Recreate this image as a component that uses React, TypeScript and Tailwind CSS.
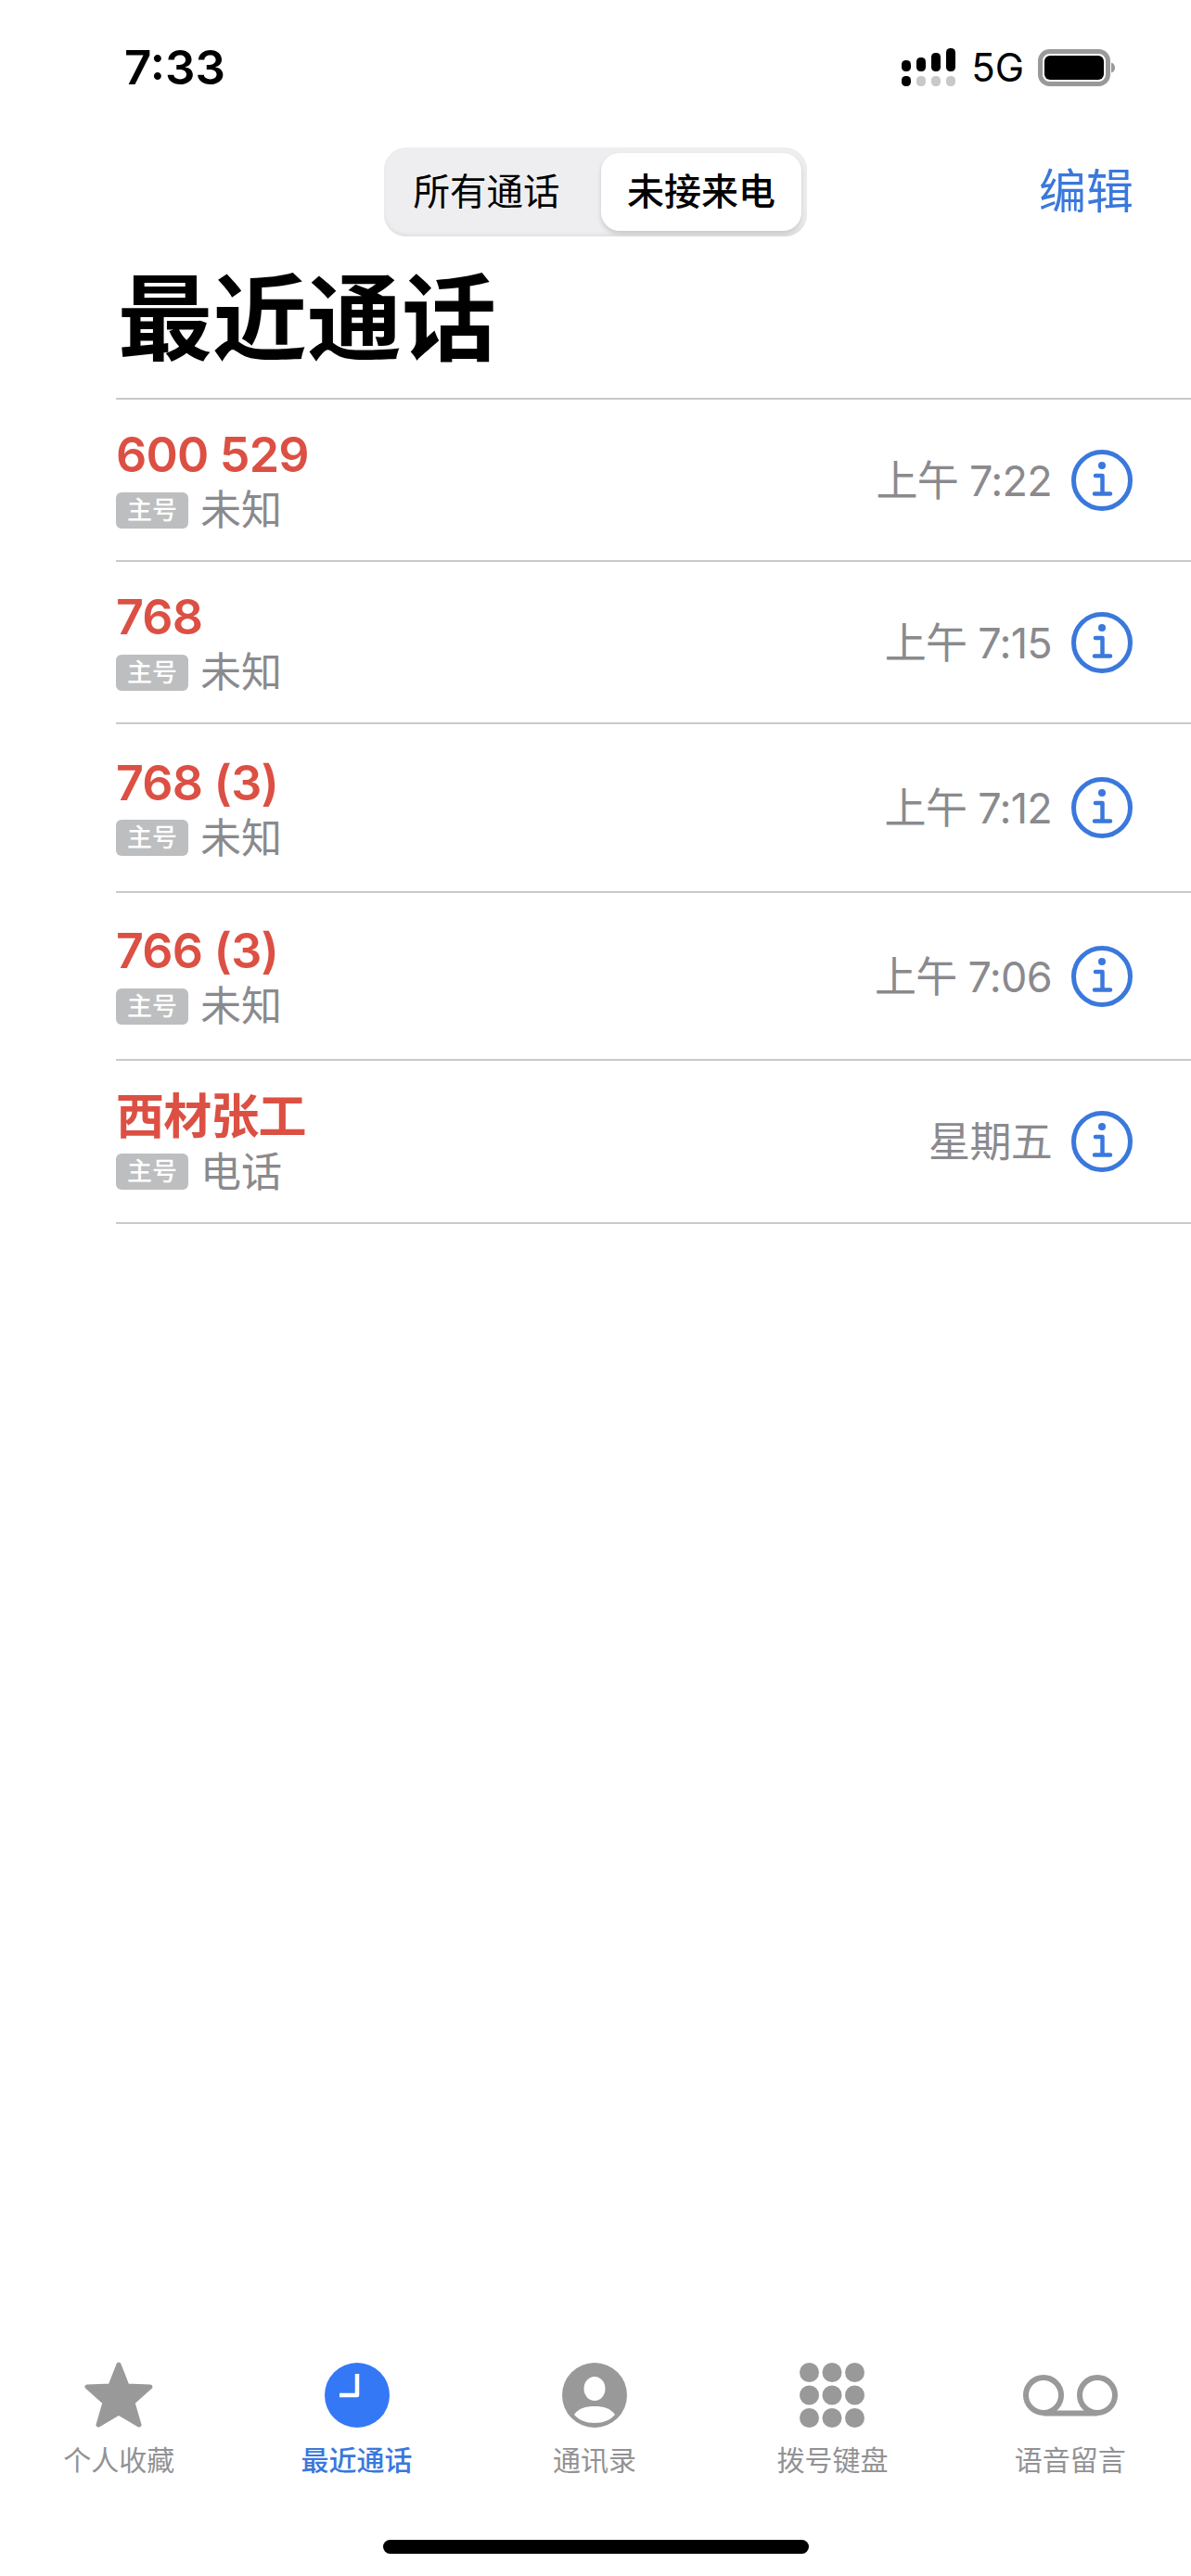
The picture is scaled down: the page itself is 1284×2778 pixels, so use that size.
const FONT = "font-['Inter','Noto_Sans_CJK_SC',sans-serif]";

const calls = [
  { name: "600 529", sub: "未知", time: "上午 7:22", h: "h-[175px]" },
  { name: "768", sub: "未知", time: "上午 7:15", h: "h-[175px]" },
  { name: "768 (3)", sub: "未知", time: "上午 7:12", h: "h-[182px]" },
  { name: "766 (3)", sub: "未知", time: "上午 7:06", h: "h-[181px]" },
  { name: "西材张工", sub: "电话", time: "星期五", h: "h-[176px]" },
];

function Signal() {
  return (
    <svg width="60" height="42" viewBox="0 0 60 42" className="block">
      <rect x="0" y="13" width="10" height="12" rx="4.5" fill="#000" />
      <rect x="16" y="10" width="10" height="15" rx="4.5" fill="#000" />
      <rect x="32" y="5" width="10" height="20" rx="4.5" fill="#000" />
      <rect x="48" y="0" width="10" height="25" rx="4.5" fill="#000" />
      <rect x="0" y="30" width="10" height="11" rx="4.5" fill="#000" />
      <rect x="16" y="30" width="10" height="11" rx="4.5" fill="#c8c8c8" />
      <rect x="32" y="30" width="10" height="11" rx="4.5" fill="#c8c8c8" />
      <rect x="48" y="30" width="10" height="11" rx="4.5" fill="#c8c8c8" />
    </svg>
  );
}

function Battery() {
  return (
    <svg width="84" height="40" viewBox="0 0 84 40" className="block">
      <rect x="2.5" y="2.5" width="73" height="35" rx="10" fill="none" stroke="#999" strokeWidth="5" />
      <rect x="7" y="7" width="64" height="26" rx="6" fill="#000" />
      <path d="M79 14.500c2.500 .8 4 2.800 4 5.500s-1.500 4.700-4 5.500z" fill="#999" />
    </svg>
  );
}

function InfoIcon() {
  return (
    <svg width="66" height="66" viewBox="0 0 66 66" className="block">
      <circle cx="33" cy="33" r="30.5" fill="none" stroke="#3a78dc" strokeWidth="5" />
      <circle cx="33" cy="17" r="4" fill="#3a78dc" />
      <path d="M26 28h7.500v19M25 47.500h17" fill="none" stroke="#3a78dc" strokeWidth="4.500" strokeLinecap="round" strokeLinejoin="round" />
    </svg>
  );
}

function StarIcon() {
  return (
    <svg width="76" height="72" viewBox="0 0 76 72" className="block">
      <path
        d="M38 3 47 26 72 27 53 44 60 68 38 55 16 68 23 44 4 27 29 26Z"
        fill="#999"
        stroke="#999"
        strokeWidth="5"
        strokeLinejoin="round"
      />
    </svg>
  );
}

function ClockIcon() {
  return (
    <svg width="70" height="70" viewBox="0 0 70 70" className="block">
      <circle cx="35" cy="35" r="35" fill="#3478f6" />
      <path d="M35 12v23H16" fill="none" stroke="#fff" strokeWidth="4.500" strokeLinejoin="round" />
    </svg>
  );
}

function ContactIcon() {
  return (
    <svg width="70" height="70" viewBox="0 0 70 70" className="block">
      <circle cx="35" cy="35" r="35" fill="#999" />
      <ellipse cx="35" cy="28" rx="11.500" ry="13" fill="#fff" />
      <path d="M13 56c5-7 12-9 22-9s17 2 22 9c-5 6-13 9-22 9s-17-3-22-9z" fill="#fff" />
    </svg>
  );
}

function KeypadIcon() {
  const centers = [10.5, 35, 59.5];
  return (
    <svg width="70" height="70" viewBox="0 0 70 70" className="block">
      {centers.map((y) =>
        centers.map((x) => <circle key={`${x}-${y}`} cx={x} cy={y} r="10.500" fill="#999" />)
      )}
    </svg>
  );
}

function VoicemailIcon() {
  return (
    <svg width="102" height="46" viewBox="0 0 102 46" className="block">
      <circle cx="22" cy="23" r="19" fill="none" stroke="#999" strokeWidth="6" />
      <circle cx="80" cy="23" r="19" fill="none" stroke="#999" strokeWidth="6" />
      <path d="M22 42.500h58" fill="none" stroke="#999" strokeWidth="6" />
    </svg>
  );
}

const tabs = [
  { label: "个人收藏", icon: <StarIcon /> },
  { label: "最近通话", icon: <ClockIcon />, active: true },
  { label: "通讯录", icon: <ContactIcon /> },
  { label: "拨号键盘", icon: <KeypadIcon /> },
  { label: "语音留言", icon: <VoicemailIcon /> },
];

export default function App() {
  return (
    <div className={`${FONT} flex h-[2778px] w-[1284px] flex-col overflow-hidden bg-white text-black`}>
      {/* status bar */}
      <div className="flex h-[159px] items-start justify-between pl-[134px] pr-[81px] pt-[44px]">
        <span className="text-[51px] leading-[58px] font-semibold">7:33</span>
        <div className="flex items-center pt-[8px]">
          <Signal />
          <span className="ml-[15px] text-[42px] leading-[42px] font-normal">5G</span>
          <div className="ml-[15px]">
            <Battery />
          </div>
        </div>
      </div>

      {/* segmented control + edit */}
      <div className="grid h-[96px] grid-cols-[1fr_auto_1fr] items-center">
        <div />
        <div className="flex h-[96px] w-[456px] items-center rounded-[24px] bg-[#eeeef0] pr-[5px] shadow-[inset_0_-3px_3px_#e2e2e4]">
          <div className="w-[217px] pl-[4px] text-center text-[39.5px] leading-[48px] text-black">所有通话</div>
          <div className="ml-[17px] flex h-[84px] w-[216px] items-center justify-center rounded-[20px] bg-white text-[40px] leading-[48px] font-medium shadow-[0_3px_5px_rgba(0,0,0,0.16)]">
            未接来电
          </div>
        </div>
        <div className="justify-self-end pr-[62px] text-[51px] leading-[60px] text-[#3a78dc]">编辑</div>
      </div>

      {/* title */}
      <div className="flex h-[174px] items-start pl-[127px] pt-[24px]">
        <h1 className="text-[102px] leading-[130px] font-bold">最近通话</h1>
      </div>

      {/* calls */}
      <div className="ml-[125px] border-t-2 border-[#c9c9cb]">
        {calls.map((c) => (
          <div key={c.time} className={`${c.h} flex items-center justify-between border-b-2 border-[#c9c9cb] pr-[63px]`}>
            <div className="flex flex-col pt-[2px]">
              <div className="h-[60px] text-[52px] leading-[60px] font-semibold tracking-[-0.8px] text-[#dc5044]">{c.name}</div>
              <div className="mt-[3px] flex h-[52px] items-center">
                <span className="flex h-[39px] w-[78px] items-center justify-center rounded-[6px] bg-[#bdbec0] text-[27px] leading-[39px] font-medium text-white">
                  主号
                </span>
                <span className="ml-[13px] text-[44px] leading-[52px] text-[#8a8a8e]">{c.sub}</span>
              </div>
            </div>
            <div className="flex items-center">
              <span className="pt-[2px] text-[45px] leading-[56px] tracking-[-0.7px] text-[#8a8a8e]">{c.time}</span>
              <div className="ml-[21px]">
                <InfoIcon />
              </div>
            </div>
          </div>
        ))}
      </div>

      {/* tab bar */}
      <div className="mt-auto grid grid-cols-5 pr-[2px]">
        {tabs.map((t) => (
          <div key={t.label} className="flex flex-col items-center">
            <div className="flex h-[76px] items-center justify-center">{t.icon}</div>
            <div
              className={`mt-[13px] text-[30px] leading-[38px] ${
                t.active ? "font-medium text-[#3a78dc]" : "text-[#929295]"
              }`}
            >
              {t.label}
            </div>
          </div>
        ))}
      </div>

      {/* home indicator */}
      <div className="flex h-[106px] items-start justify-center pt-[67px]">
        <div className="h-[15px] w-[459px] rounded-full bg-black" />
      </div>
    </div>
  );
}
